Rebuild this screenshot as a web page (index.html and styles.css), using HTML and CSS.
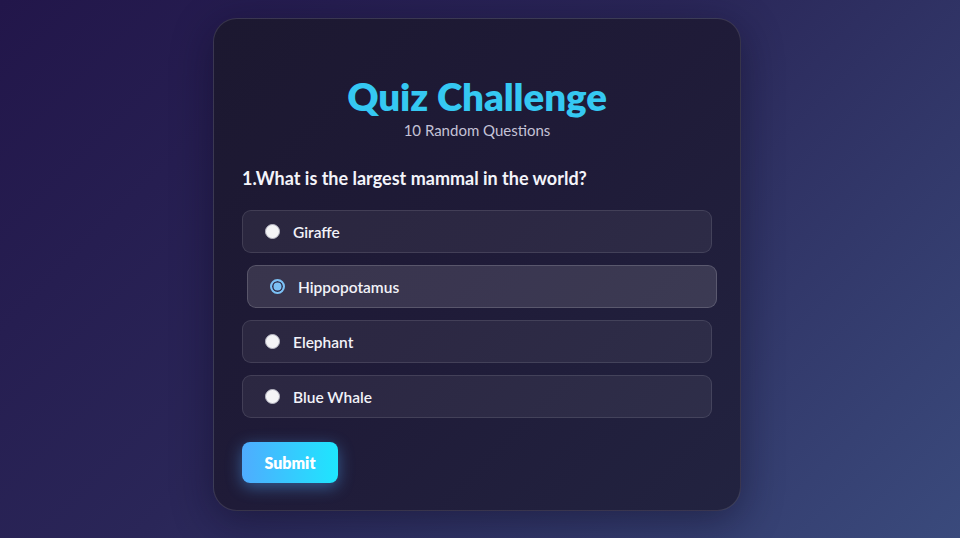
FILE: index.html
```html
<!DOCTYPE html>
<html lang="en">
<head>
<meta charset="utf-8">
<title>Quiz Challenge</title>
<link rel="stylesheet" href="styles.css">
</head>
<body>
<main class="page">
  <section class="card">
    <header class="head">
      <h1 class="title">Quiz Challenge</h1>
      <p class="subtitle">10 Random Questions</p>
    </header>
    <h2 class="question">1.What is the largest mammal in the world?</h2>
    <div class="options">
      <label class="option"><span class="radio"></span><span class="label">Giraffe</span></label>
      <label class="option option-active"><span class="radio radio-checked"></span><span class="label">Hippopotamus</span></label>
      <label class="option"><span class="radio"></span><span class="label">Elephant</span></label>
      <label class="option"><span class="radio"></span><span class="label">Blue Whale</span></label>
    </div>
    <button class="submit" type="button">Submit</button>
  </section>
</main>
</body>
</html>
```
FILE: styles.css
```css
* { box-sizing: border-box; }
html, body { margin: 0; height: 100%; }
body {
  font-family: "Lato", "Inter", "Liberation Sans", sans-serif;
  background: linear-gradient(135deg, #22164a 0%, #2a2658 45%, #3a4a7c 100%);
  color: #fff;
  overflow: hidden;
}
.page {
  display: flex;
  justify-content: center;
  padding: 18px 6px 0 0;
}
.card {
  width: 528px;
  height: 493px;
  background: linear-gradient(135deg, #1c1830 0%, #1f1b38 50%, #222340 100%);
  border: 1px solid rgba(255,255,255,0.12);
  border-radius: 24px;
  padding: 54px 28px 28px;
  box-shadow: 0 10px 40px rgba(10, 8, 30, 0.45);
}
.head { text-align: center; }
.title {
  margin: 0;
  font-size: 38.5px;
  line-height: 46px;
  font-weight: 800;
  color: #35c8f2;
  letter-spacing: -0.1px;
}
.subtitle {
  margin: 1px 0 0;
  font-size: 15px;
  line-height: 20px;
  color: #c4c2d6;
}
.question {
  margin: 26px 0 20px;
  font-size: 18px;
  line-height: 24px;
  font-weight: 700;
  color: #f4f4fa;
}
.options {
  display: flex;
  flex-direction: column;
  gap: 12px;
}
.option {
  display: flex;
  align-items: center;
  gap: 13px;
  height: 43px;
  padding: 0 22px;
  background: rgba(255,255,255,0.06);
  border: 1px solid rgba(255,255,255,0.11);
  border-radius: 9px;
}
.option-active {
  transform: translateX(5px);
  background: rgba(255,255,255,0.12);
  border-color: rgba(255,255,255,0.16);
}
.radio {
  width: 15px;
  height: 15px;
  border-radius: 50%;
  background: #f4f4f6;
  border: 1px solid #b8b8c4;
  flex: none;
}
.radio-checked {
  background: #7cc1f5;
  border: 2px solid #7cc1f5;
  box-shadow: inset 0 0 0 1.5px #2f2d4b;
}
.label {
  font-size: 15.5px;
  font-weight: 600;
  color: #f2f2f8;
}
.submit {
  margin-top: 24px;
  width: 96px;
  height: 41px;
  border: 0;
  border-radius: 8px;
  background: linear-gradient(90deg, #4facfe 0%, #1ee6fe 100%);
  color: #fff;
  font-family: inherit;
  font-size: 16px;
  font-weight: 800;
  box-shadow: 0 4px 16px rgba(79, 172, 254, 0.45);
}
```
